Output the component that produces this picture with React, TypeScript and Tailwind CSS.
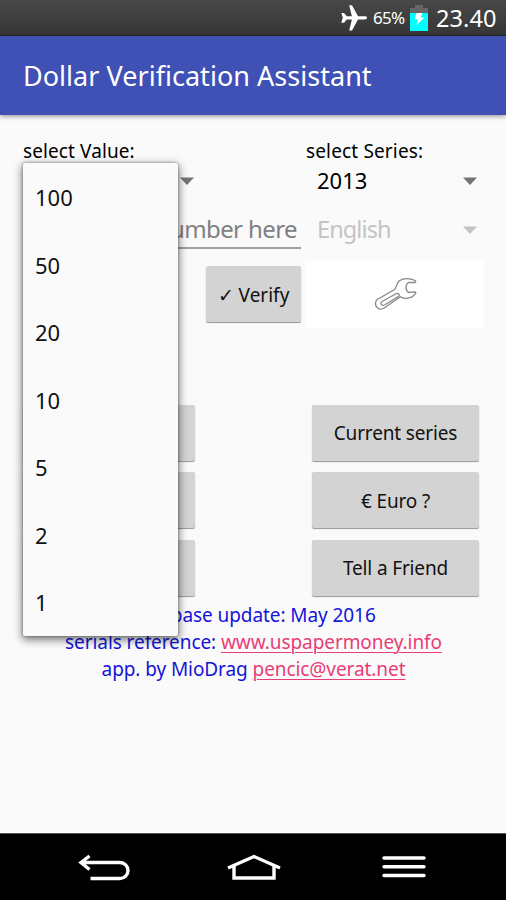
import type { ReactNode } from "react";

const values = ["100", "50", "20", "10", "5", "2", "1"];

const actions = ["Current series", "€ Euro ?", "Tell a Friend"];

const Caret = ({ className = "" }: { className?: string }) => (
  <svg viewBox="0 0 14 8" className={`h-2 w-3.5 ${className}`} fill="currentColor">
    <path d="M0 0.5h14L7 8z" />
  </svg>
);

const Button = ({ className = "", children }: { className?: string; children?: ReactNode }) => (
  <button
    className={`flex h-14 items-center justify-center rounded-[2px] bg-[#d3d3d3] pt-0.5 text-[19px] whitespace-nowrap text-[#111] shadow-[0_1px_1px_rgba(0,0,0,0.4)] ${className}`}
  >
    {children}
  </button>
);

const StatusBar = () => (
  <div className="flex h-9 items-center justify-end border-b border-[#24262b] bg-gradient-to-b from-[#484848] to-[#363636] pr-[9px] text-white">
    <svg viewBox="0 0 28 28" className="h-7 w-7" fill="currentColor">
      <path d="M27 13.800c0 1.100-1 1.600-2.200 1.600h-6.800L12 26.500H9.200l2.700-11.100H6.800L4 18.700H1.300l1.500-4.900L1.300 9h2.700l2.800 3.200h5.100L9.200 1.200H12l6 11h6.800c1.200 0 2.200.4 2.200 1.600z" />
    </svg>
    <span className="ml-[5px] w-[34px] text-[17px] tracking-[-0.7px] whitespace-nowrap">65%</span>
    <svg viewBox="0 0 18 28" className="ml-[3px] h-7 w-[18px]">
      <path d="M5 1h8v3h5v6H0V4h5z" fill="#666" />
      <path d="M0 9h18v18H0z" fill="#0ff" />
      <path d="M6.500 9h6l-2 4.500h4L6.500 21l1.500-5.500H4.500z" fill="#fff" />
    </svg>
    <span className="ml-2 w-[61px] pt-0.5 text-[23.5px] tracking-[0.1px] whitespace-nowrap">23.40</span>
  </div>
);

const ValueMenu = () => (
  <ul className="absolute top-[163px] left-[23px] h-[473px] w-[155px] rounded-[2px] bg-[#fafafa] shadow-[0_3px_8px_1px_rgba(0,0,0,0.5),0_0_3px_rgba(0,0,0,0.4)]">
    {values.map((value) => (
      <li key={value} className="flex h-[67.5px] items-center pt-0.5 pl-[12px] text-[22px] text-[#111]">
        {value}
      </li>
    ))}
  </ul>
);

const NavBar = () => (
  <nav className="flex h-[67px] items-center justify-between border-t border-[#555] bg-black pr-[79px] pb-px pl-[78px] text-white">
    <svg viewBox="0 0 52 28" className="h-7 w-[52px]" fill="none" stroke="currentColor" strokeWidth="3.400">
      <path d="M3 9.500h39a7.500 7.500 0 0 1 0 16H12.500M11.500 3 3 9.500l8.500 7" />
    </svg>
    <svg viewBox="0 0 54 28" className="mr-1 h-7 w-[54px]" fill="none" stroke="currentColor" strokeWidth="3.400">
      <path d="M1 15 27 3.500l26 11.500M7 13v12h40V13" />
    </svg>
    <svg viewBox="0 0 46 28" className="h-7 w-[46px]" stroke="currentColor" strokeWidth="3.500" strokeLinecap="round">
      <path d="M3 5h40M3 13.700h40M3 22.400h40" />
    </svg>
  </nav>
);

export default function App() {
  return (
    <div className="relative flex h-[900px] w-[506px] flex-col overflow-hidden bg-[#fafafa] font-['Noto_Sans',sans-serif] text-black">
      <StatusBar />
      <header className="flex h-[79px] items-center bg-[#3f51b5] pt-0.5 pl-[23px] shadow-[0_1px_5px_rgba(0,0,0,0.45)]">
        <h1 className="text-[27px] tracking-[0.03px] whitespace-nowrap text-white">Dollar Verification Assistant</h1>
      </header>

      <main className="flex-1 pr-[22px] pl-[23px]">
        <div className="flex justify-between pt-[23px] text-[19px] leading-[26px]">
          <span className="tracking-[0.1px]">select Value:</span>
          <span className="w-[178px] tracking-[0.15px]">select Series:</span>
        </div>

        <div className="flex h-[33px] items-center justify-between">
          <div className="flex w-[171px] justify-end">
            <Caret className="text-[#737373]" />
          </div>
          <div className="flex w-[167px] items-center justify-between pr-[7px]">
            <span className="text-[22px]">2013</span>
            <Caret className="text-[#737373]" />
          </div>
        </div>

        <div className="flex h-[63px] justify-between pt-[7px]">
          <div className="h-[45px] w-[278px] border-b-2 border-[#a0a0a0] pr-1 text-right text-[24px] leading-[50px] tracking-[-0.6px] text-[#808080]">
            serial number here
          </div>
          <div className="flex h-[50px] w-[167px] items-center justify-between pt-0.5 pr-[7px] text-[#c4c4c4]">
            <span className="text-[23.5px] tracking-[-0.9px]">English</span>
            <Caret />
          </div>
        </div>

        <div className="flex h-[68px] items-center justify-end gap-1">
          <Button className="w-[95px]">✓ Verify</Button>
          <div className="flex h-[68px] w-[179px] items-center justify-center bg-white">
            <svg viewBox="0 0 44 34" className="ml-0.5 h-[34px] w-11" fill="none" stroke="#888" strokeWidth="1.300">
              <path d="M3.300 22.500 20.500 12.500c2-1.300 1.800-6 4.300-8.300C28.500 1 36 .800 41 3.500c1 .8.800 1.800 0 2h-6.500c-2 1.200-2.500 3-2.500 5s.8 4 2.500 5l6.500-.6c1 .2 1 1 .4 1.800-2 3-6 4.800-10.400 4.600-1.800 0-3.200-.6-4.500-1.600L9.500 31.500c-2.500 1-5 .800-6.700-1.300s-1.900-5.900.5-7.700z" />
              <path d="m8 24.500 14-7.700c2.600-1.200 4.500 1.300 2.300 2.800L10.500 28c-2.700 1.200-5-2-2.500-3.500z" />
            </svg>
          </div>
        </div>

        <div className="flex flex-col gap-[11.5px] pt-[76.5px]">
          {actions.map((label) => (
            <div key={label} className="flex justify-between pr-[5px]">
              <Button className="w-[172px]" />
              <Button className="w-[167px] tracking-[-0.15px]">{label}</Button>
            </div>
          ))}
        </div>

        <div className="pt-1.5 text-center text-[19px] leading-[27px] tracking-[-0.08px] whitespace-nowrap text-[#1414d8]">
          <p>database update: May 2016</p>
          <p>
            serials reference:{" "}
            <a className="text-[#e83e78] underline decoration-1 underline-offset-3">www.uspapermoney.info</a>
          </p>
          <p>
            app. by MioDrag{" "}
            <a className="text-[#e83e78] underline decoration-1 underline-offset-3">pencic@verat.net</a>
          </p>
        </div>
      </main>

      <NavBar />
      <ValueMenu />
    </div>
  );
}
